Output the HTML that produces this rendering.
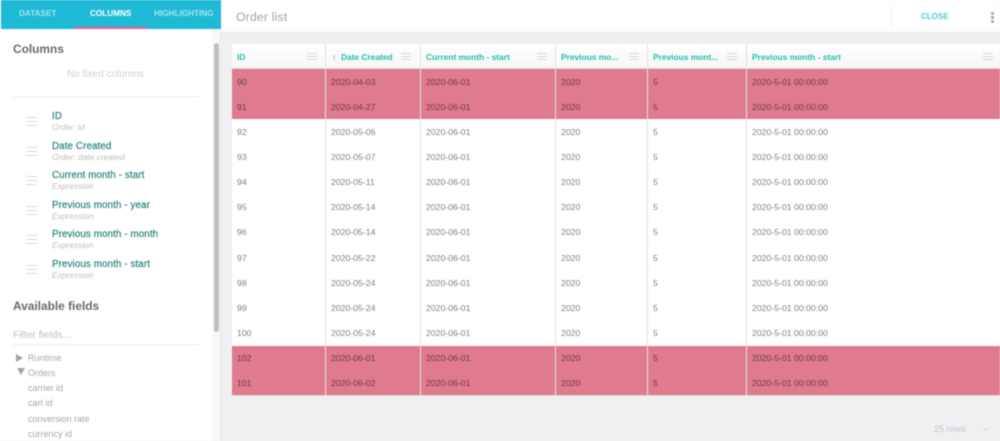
<!DOCTYPE html>
<html><head><meta charset="utf-8"><style>
*{box-sizing:border-box}
html,body{margin:0;padding:0;width:1000px;height:441px;overflow:hidden;background:#eef0f2;font-family:"Liberation Sans",sans-serif}
#p{position:relative;width:1000px;height:441px;overflow:hidden;filter:blur(.45px)}
#p div{position:absolute;white-space:nowrap}
.side{left:0;top:0;width:221px;height:441px;background:#fff;border-right:1px solid #e8eaec}
.tabs{left:1px;top:0;width:220px;height:29px;background:#1fbad6}
.tab{top:8px;font-size:8.2px;line-height:11px;font-weight:bold;color:#a5e3ee}
.h{font-size:11.9px;line-height:15px;font-weight:bold;color:#6a6a6a}
.cn{left:52px;font-size:9.8px;line-height:12px;color:#1f8278;letter-spacing:.1px;-webkit-text-stroke:.15px #1f8278}
.cs{left:52px;font-size:8.4px;line-height:10px;color:#bdbdbd;font-style:italic}
.dr{left:26px;width:11px;height:9px;border-top:1px solid #dadada;border-bottom:1px solid #dadada}
.dr::after{content:"";position:absolute;left:0;right:0;top:3px;height:1px;background:#dadada}
.f{left:28px;font-size:9px;line-height:11px;color:#a4aaae}
.top{left:221px;top:0;width:779px;height:33px;background:#fff;border-bottom:1px solid #e5e7e9}
.th{top:44px;height:25px;background:linear-gradient(#fff,#f6f6f6);border-bottom:1px solid #d8d8d8}
.tt{top:52px;font-size:8.4px;line-height:11px;font-weight:bold;color:#20bfae}
.m{top:53px;width:10px;height:7px;border-top:1px solid #d8d8d8;border-bottom:1px solid #d8d8d8}
.m::after{content:"";position:absolute;left:0;right:0;top:2px;height:1px;background:#d8d8d8}
.band{left:232px;width:768px}
.v{top:44px;width:1px;height:352px;background:#e2e2e2;z-index:3}
.r{left:232px;width:768px;height:25px;font-size:8.7px;line-height:25px;color:#808080}
.r.k{color:#6e3b4b}
.r span{position:absolute;top:1px}
.a{left:5px}.b{left:99px}.c{left:194px}.d{left:329px}.e{left:421px}.g{left:520px}
</style></head><body><div id="p">

<div class="band" style="top:44px;height:352px;background:#fff"></div>
<div class="band" style="top:69px;height:50px;background:#df7a8f"></div>
<div class="band" style="top:346px;height:50px;background:#df7a8f"></div>
<div class="band" style="top:395px;height:1px;background:#d8d8d8"></div>

<div class="th" style="left:232px;width:768px"></div>
<div class="v" style="left:325px"></div><div class="v" style="left:420px"></div><div class="v" style="left:555px"></div><div class="v" style="left:647px"></div><div class="v" style="left:746px"></div>

<div class="tt" style="left:237px">ID</div><div class="m" style="left:307px"></div>
<div class="tt" style="left:332px">↑</div><div class="tt" style="left:341px">Date Created</div><div class="m" style="left:401px"></div>
<div class="tt" style="left:426px">Current month - start</div><div class="m" style="left:537px"></div>
<div class="tt" style="left:561px">Previous mo...</div><div class="m" style="left:629px"></div>
<div class="tt" style="left:653px">Previous mont...</div><div class="m" style="left:727px"></div>
<div class="tt" style="left:752px">Previous month - start</div><div class="m" style="left:983px"></div>

<div class="r k" style="top:69px"><span class="a">90</span><span class="b">2020-04-03</span><span class="c">2020-06-01</span><span class="d">2020</span><span class="e">5</span><span class="g">2020-5-01 00:00:00</span></div>
<div class="r k" style="top:94px"><span class="a">91</span><span class="b">2020-04-27</span><span class="c">2020-06-01</span><span class="d">2020</span><span class="e">5</span><span class="g">2020-5-01 00:00:00</span></div>
<div class="r" style="top:119px"><span class="a">92</span><span class="b">2020-05-06</span><span class="c">2020-06-01</span><span class="d">2020</span><span class="e">5</span><span class="g">2020-5-01 00:00:00</span></div>
<div class="r" style="top:144px"><span class="a">93</span><span class="b">2020-05-07</span><span class="c">2020-06-01</span><span class="d">2020</span><span class="e">5</span><span class="g">2020-5-01 00:00:00</span></div>
<div class="r" style="top:169px"><span class="a">94</span><span class="b">2020-05-11</span><span class="c">2020-06-01</span><span class="d">2020</span><span class="e">5</span><span class="g">2020-5-01 00:00:00</span></div>
<div class="r" style="top:194px"><span class="a">95</span><span class="b">2020-05-14</span><span class="c">2020-06-01</span><span class="d">2020</span><span class="e">5</span><span class="g">2020-5-01 00:00:00</span></div>
<div class="r" style="top:219px"><span class="a">96</span><span class="b">2020-05-14</span><span class="c">2020-06-01</span><span class="d">2020</span><span class="e">5</span><span class="g">2020-5-01 00:00:00</span></div>
<div class="r" style="top:245px"><span class="a">97</span><span class="b">2020-05-22</span><span class="c">2020-06-01</span><span class="d">2020</span><span class="e">5</span><span class="g">2020-5-01 00:00:00</span></div>
<div class="r" style="top:270px"><span class="a">98</span><span class="b">2020-05-24</span><span class="c">2020-06-01</span><span class="d">2020</span><span class="e">5</span><span class="g">2020-5-01 00:00:00</span></div>
<div class="r" style="top:295px"><span class="a">99</span><span class="b">2020-05-24</span><span class="c">2020-06-01</span><span class="d">2020</span><span class="e">5</span><span class="g">2020-5-01 00:00:00</span></div>
<div class="r" style="top:320px"><span class="a">100</span><span class="b">2020-05-24</span><span class="c">2020-06-01</span><span class="d">2020</span><span class="e">5</span><span class="g">2020-5-01 00:00:00</span></div>
<div class="r k" style="top:345px"><span class="a">102</span><span class="b">2020-06-01</span><span class="c">2020-06-01</span><span class="d">2020</span><span class="e">5</span><span class="g">2020-5-01 00:00:00</span></div>
<div class="r k" style="top:370px"><span class="a">101</span><span class="b">2020-06-02</span><span class="c">2020-06-01</span><span class="d">2020</span><span class="e">5</span><span class="g">2020-5-01 00:00:00</span></div>

<div class="top"></div>
<div style="left:236px;top:10px;font-size:12.2px;line-height:15px;color:#a3a3a3;letter-spacing:.2px">Order list</div>
<div style="left:891px;top:7px;width:1px;height:19px;background:#ececec"></div>
<div style="left:921px;top:11px;font-size:8px;line-height:11px;font-weight:bold;color:#4cc9e0">CLOSE</div>
<div style="left:991px;top:12px;width:3px;height:3px;border-radius:50%;background:#a5a5a5"></div>
<div style="left:991px;top:16px;width:3px;height:3px;border-radius:50%;background:#a5a5a5"></div>
<div style="left:991px;top:20px;width:3px;height:3px;border-radius:50%;background:#a5a5a5"></div>

<div style="left:934px;top:424px;font-size:9px;line-height:11px;color:#c3c6c8">25 rows</div>
<svg style="position:absolute;left:982px;top:427px" width="7" height="5" viewBox="0 0 7 5"><path d="M1 1l2.500 2.500L6 1" fill="none" stroke="#d8dadc" stroke-width="1"/></svg>

<div class="side"></div>
<div class="tabs"></div>
<div class="tab" style="left:19px">DATASET</div>
<div class="tab" style="left:90px;color:#fff">COLUMNS</div>
<div class="tab" style="left:154px">HIGHLIGHTING</div>
<div style="left:74px;top:27px;width:73px;height:2px;background:#ec5f95"></div>

<div style="left:212px;top:29px;width:8px;height:412px;background:#f8f8f8"></div>
<div style="left:214px;top:43px;width:5px;height:289px;border-radius:3px;background:#c0c0c0"></div>

<div class="h" style="left:13px;top:42px">Columns</div>
<div style="left:67px;top:69px;font-size:9.8px;line-height:12px;color:#cfcfcf;letter-spacing:.1px">No fixed columns</div>
<div style="left:13px;top:96px;width:186px;height:1px;background:#ececec"></div>

<div class="dr" style="left:26px;top:117px"></div><div class="cn" style="top:111px">ID</div><div class="cs" style="top:122px">Order: id</div>
<div class="dr" style="top:147px"></div><div class="cn" style="top:141px">Date Created</div><div class="cs" style="top:152px">Order: date created</div>
<div class="dr" style="top:176px"></div><div class="cn" style="top:170px">Current month - start</div><div class="cs" style="top:181px">Expression</div>
<div class="dr" style="top:206px"></div><div class="cn" style="top:200px">Previous month - year</div><div class="cs" style="top:211px">Expression</div>
<div class="dr" style="top:235px"></div><div class="cn" style="top:229px">Previous month - month</div><div class="cs" style="top:240px">Expression</div>
<div class="dr" style="top:265px"></div><div class="cn" style="top:259px">Previous month - start</div><div class="cs" style="top:270px">Expression</div>

<div class="h" style="left:13px;top:299px">Available fields</div>
<div style="left:13px;top:330px;font-size:10px;line-height:12px;color:#bdbdbd;letter-spacing:.1px">Filter fields...</div>
<div style="left:13px;top:344px;width:186px;height:1px;background:#eaecee"></div>

<svg style="position:absolute;left:16px;top:354px" width="7" height="8" viewBox="0 0 7 8"><path d="M0 0L7 4L0 8z" fill="#a0a5a9"/></svg>
<div class="f" style="top:353px">Runtime</div>
<svg style="position:absolute;left:17px;top:368px" width="8" height="7" viewBox="0 0 8 7"><path d="M0 0H8L4 7z" fill="#a0a5a9"/></svg>
<div class="f" style="top:368px">Orders</div>
<div class="f" style="top:383px">carrier id</div>
<div class="f" style="top:398px">cart id</div>
<div class="f" style="top:414px">conversion rate</div>
<div class="f" style="top:429px">currency id</div>
</div></body></html>
